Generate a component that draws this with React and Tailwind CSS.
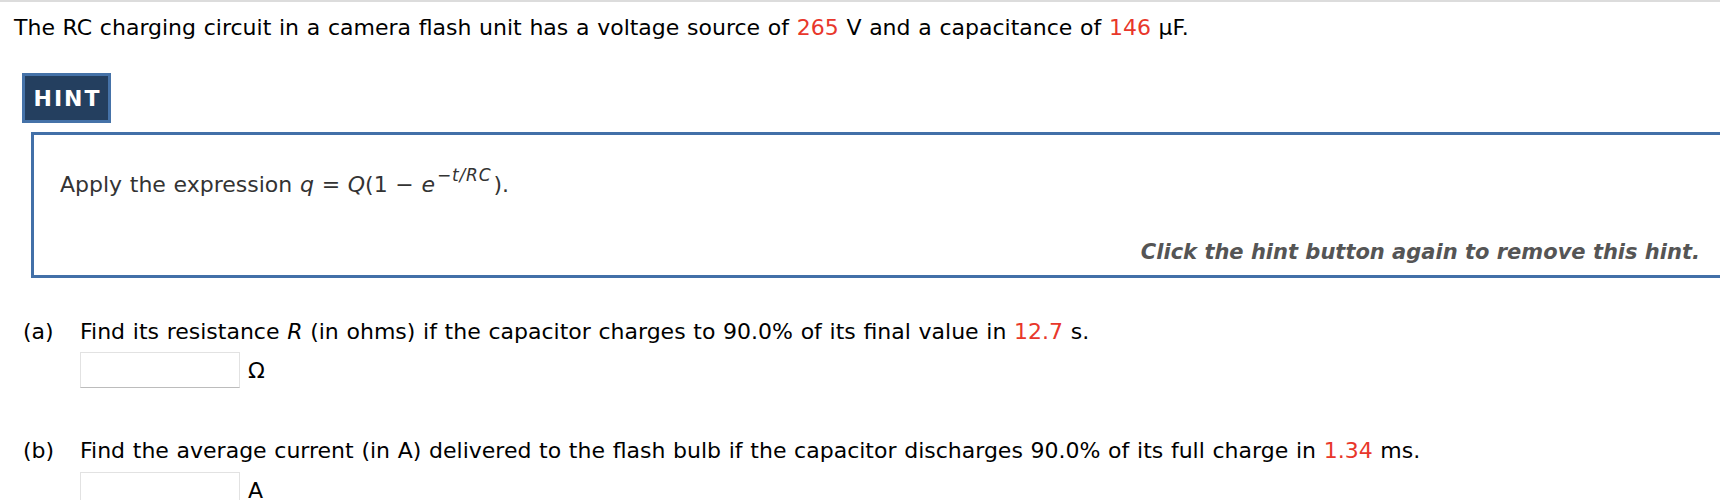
import React from 'react';

const red = 'text-[#e8372b]';

function AnswerBox({ unit }) {
  return (
    <div className="ml-[57px] flex items-center gap-[8px]">
      <input
        type="text"
        className="w-[160px] h-[36px] border border-[#e2e2e2] border-b-[#bcbcbc] bg-white outline-none"
      />
      <span>{unit}</span>
    </div>
  );
}

export default function App() {
  return (
    <div className="w-[1720px] h-[500px] overflow-hidden bg-white text-black font-['DejaVu_Sans',sans-serif] [word-spacing:0.7px]">
      <div className="h-[2px] bg-[#dcdcdc]" />

      {/* question stem */}
      <p className="pl-[14px] pt-[9px] text-[22px] leading-[33px]">
        The RC charging circuit in a camera flash unit has a voltage source of <span className={red}>265</span> V and a
        capacitance of <span className={red}>146</span> μF.
      </p>

      {/* hint toggle */}
      <div className="pl-[22px] mt-[29px]">
        <button className="flex h-[50px] w-[89px] items-center justify-center border-[3px] border-[#4572a8] bg-[#243f5f] pl-[2px] text-[22px] font-bold tracking-[2px] text-white">
          HINT
        </button>
      </div>

      {/* hint panel */}
      <div className="ml-[31px] mr-[-3px] mt-[9px] border-[3px] border-[#4270a8] pl-[26px] pr-[20px] pt-[33px] pb-[6px]">
        <p className="text-[22px] leading-[33px] text-[#333]">
          Apply the expression <i>q</i> = <i>Q</i>(1 − <i>e</i>
          <span className="relative -top-[11px] ml-[2px] mr-[2px] text-[17px] leading-none italic tracking-[0.8px]">−t/RC</span>).
        </p>
        <p className="mt-[35px] text-right text-[21px] leading-[33px] font-bold italic text-[#555] [word-spacing:0px]">
          Click the hint button again to remove this hint.
        </p>
      </div>

      {/* parts */}
      <div className="mt-[37px] pl-[23px] text-[22px] leading-[33px]">
        <div className="flex">
          <span className="w-[57px] shrink-0">(a)</span>
          <span>
            Find its resistance <i>R</i> (in ohms) if the capacitor charges to 90.0% of its final value in{' '}
            <span className={red}>12.7</span> s.
          </span>
        </div>
        <div className="mt-[4px]">
          <AnswerBox unit="Ω" />
        </div>

        <div className="mt-[46px] flex">
          <span className="w-[57px] shrink-0">(b)</span>
          <span>
            Find the average current (in A) delivered to the flash bulb if the capacitor discharges 90.0% of its full
            charge in <span className={red}>1.34</span> ms.
          </span>
        </div>
        <div className="mt-[5px]">
          <AnswerBox unit="A" />
        </div>
      </div>
    </div>
  );
}
